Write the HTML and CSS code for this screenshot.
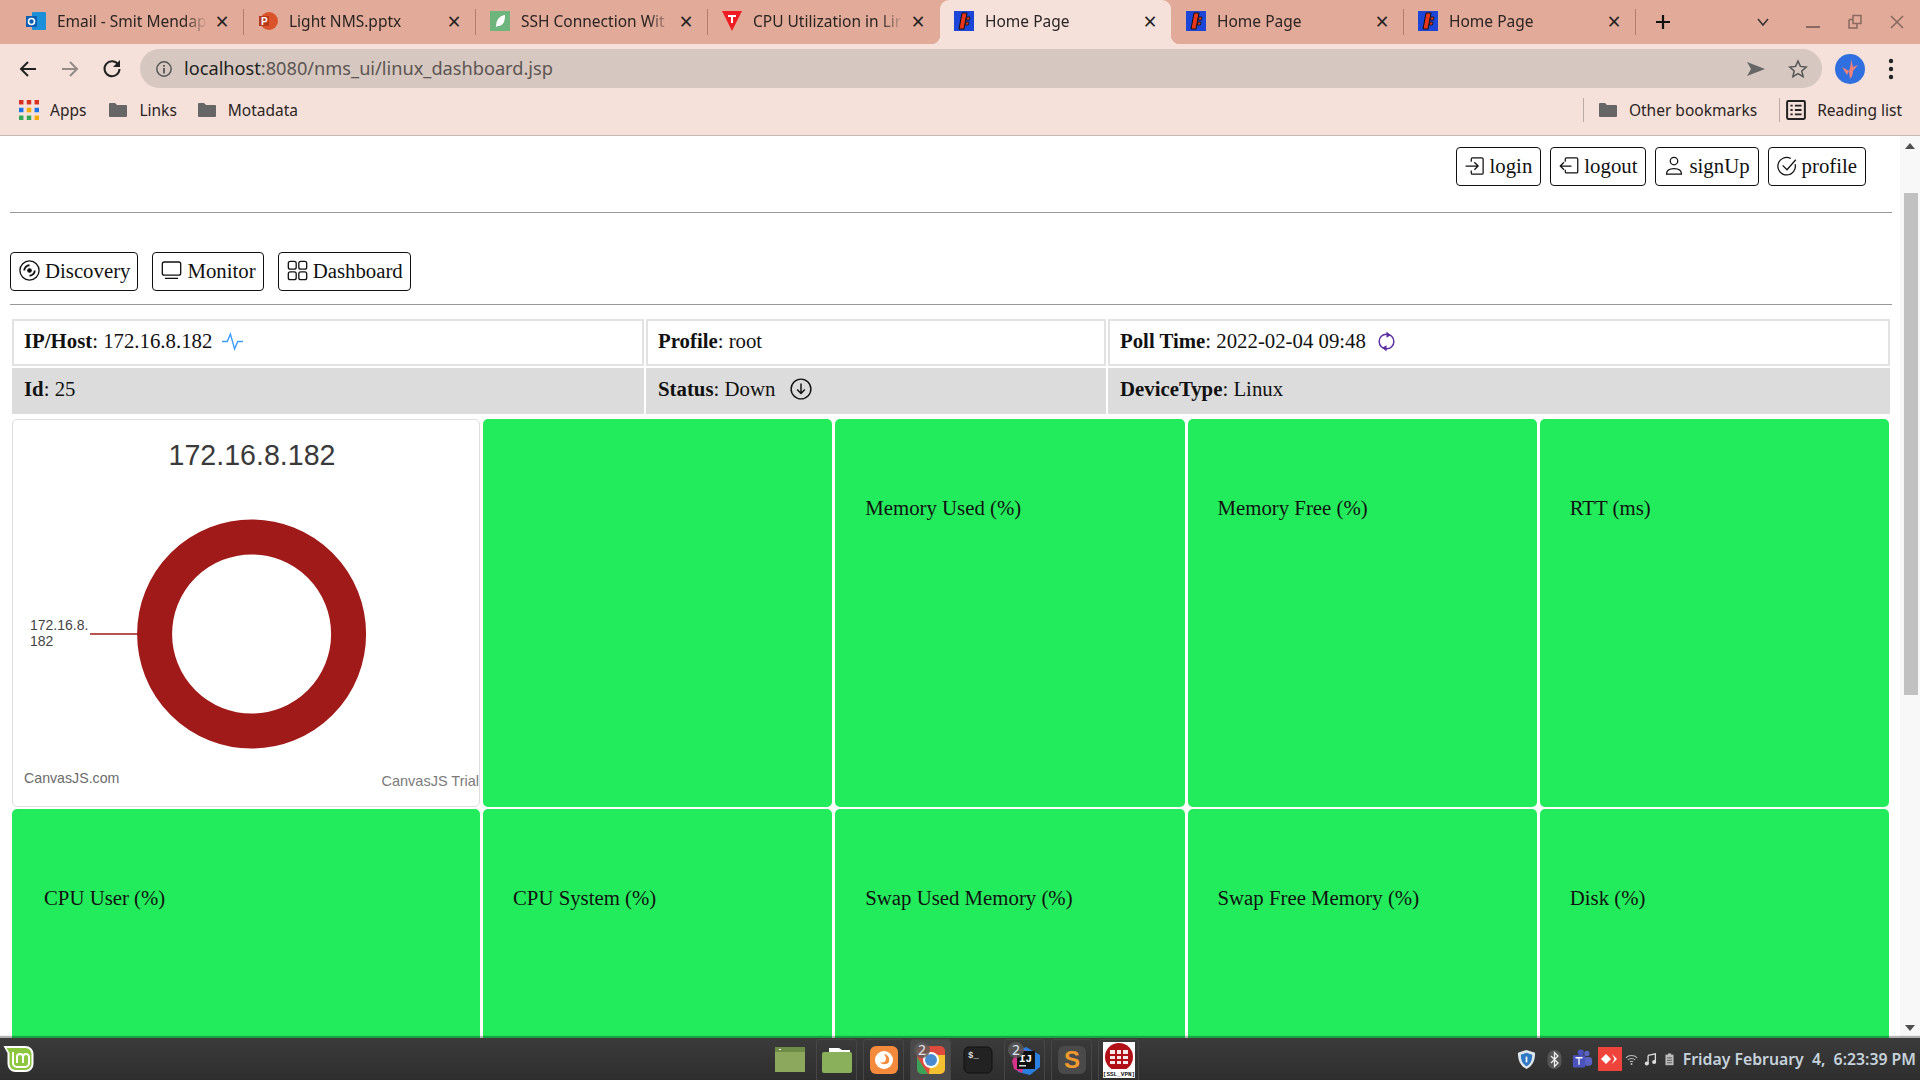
FILE: index.html
```html
<!DOCTYPE html>
<html lang="en">
<head>
    <meta charset="UTF-8">
    <title>Home Page</title>
    <link rel="stylesheet" href="styles.css">
</head>
<body>
    <svg class="defs" width="0" height="0">
        <symbol id="fav-home" viewBox="0 0 20 20">
            <rect width="20" height="20" fill="#1c46d8"/>
            <path d="M8 2h5l-3 16H5z" fill="#e8351c" stroke="#111" stroke-width="1"/>
            <path d="M13 6h3l-.6 3h-3zM12 11h3l-.6 3h-3z" fill="#e8351c" stroke="#111" stroke-width=".8"/>
        </symbol>
        <symbol id="folder" viewBox="0 0 20 20">
            <path d="M1 4a1 1 0 0 1 1-1h5l2 2h9a1 1 0 0 1 1 1v10a1 1 0 0 1-1 1H2a1 1 0 0 1-1-1z" fill="#666"/>
        </symbol>
    </svg>

    <!-- browser window -->
    <div class="tabstrip">
        <div class="tab">
            <svg class="fav" viewBox="0 0 20 20"><rect x="6" y="1" width="14" height="18" rx="1" fill="#1b8fd8"/><rect x="0" y="5" width="11" height="11" fill="#0a5fb4"/><circle cx="5.5" cy="10.5" r="3" fill="none" stroke="#fff" stroke-width="1.6"/></svg>
            <span class="tab-title">Email - Smit Mendap</span>
            <span class="tab-close">×</span>
        </div>
        <i class="tab-sep"></i>
        <div class="tab">
            <svg class="fav" viewBox="0 0 20 20"><circle cx="11" cy="10" r="9" fill="#d9542b"/><rect x="1" y="5" width="10" height="10" fill="#b7391a"/><text x="3" y="13.5" class="fav-letter">P</text></svg>
            <span class="tab-title">Light NMS.pptx</span>
            <span class="tab-close">×</span>
        </div>
        <i class="tab-sep"></i>
        <div class="tab">
            <svg class="fav" viewBox="0 0 20 20"><rect width="20" height="20" fill="#6db57c"/><path d="M6 16c0-7 3-11 9-12 0 7-2 11-7 11z" fill="#fff"/></svg>
            <span class="tab-title">SSH Connection Wit</span>
            <span class="tab-close">×</span>
        </div>
        <i class="tab-sep"></i>
        <div class="tab">
            <svg class="fav" viewBox="0 0 20 20"><path d="M0 0h20L10 20z" fill="#ee1c25"/><path d="M6 4h8v2h-3v6H9V6H6z" fill="#fff"/></svg>
            <span class="tab-title">CPU Utilization in Lir</span>
            <span class="tab-close">×</span>
        </div>
        <i class="tab-sep tab-sep-off"></i>
        <div class="tab tab-active">
            <svg class="fav"><use href="#fav-home"/></svg>
            <span class="tab-title">Home Page</span>
            <span class="tab-close">×</span>
        </div>
        <i class="tab-sep tab-sep-off"></i>
        <div class="tab">
            <svg class="fav"><use href="#fav-home"/></svg>
            <span class="tab-title">Home Page</span>
            <span class="tab-close">×</span>
        </div>
        <i class="tab-sep"></i>
        <div class="tab">
            <svg class="fav"><use href="#fav-home"/></svg>
            <span class="tab-title">Home Page</span>
            <span class="tab-close">×</span>
        </div>
        <i class="tab-sep"></i>
        <svg class="strip-plus" viewBox="0 0 16 16"><path d="M8 1v14M1 8h14" stroke="#111" stroke-width="2.2"/></svg>
        <div class="window-controls">
            <svg class="win-icon win-chevron" viewBox="0 0 16 16"><path d="M3 5l5 6 5-6" fill="none" stroke="#333" stroke-width="1.5"/></svg>
            <svg class="win-icon" viewBox="0 0 16 16"><path d="M1 13h14" stroke="#8a6a60" stroke-width="2"/></svg>
            <svg class="win-icon" viewBox="0 0 16 16"><path d="M6 1.5h8v8H6zM2 5.5h4M2 5.500v8.500h8v-4" fill="none" stroke="#8a6a60" stroke-width="1.5"/></svg>
            <svg class="win-icon" viewBox="0 0 16 16"><path d="M2 2l12 12M14 2L2 14" stroke="#8a6a60" stroke-width="1.6"/></svg>
        </div>
    </div>

    <div class="toolbar">
        <svg class="nav-icon" viewBox="0 0 20 20"><path d="M18 10H3M10 3l-7 7 7 7" fill="none" stroke="#222" stroke-width="2"/></svg>
        <svg class="nav-icon" viewBox="0 0 20 20"><path d="M2 10h15M10 3l7 7-7 7" fill="none" stroke="#948a86" stroke-width="2"/></svg>
        <svg class="nav-icon" viewBox="0 0 20 20"><path d="M16.500 6A7.500 7.500 0 1 0 17.500 10" fill="none" stroke="#222" stroke-width="2"/><path d="M18 1v7h-7z" fill="#222"/></svg>
        <div class="omnibox">
            <svg class="omni-info" viewBox="0 0 20 20"><circle cx="10" cy="10" r="8" fill="none" stroke="#555" stroke-width="1.600"/><path d="M10 9v6M10 5.500v2" stroke="#555" stroke-width="2"/></svg>
            <span class="omni-url"><b>localhost</b>:8080/nms_ui/linux_dashboard.jsp</span>
            <svg class="omni-action" viewBox="0 0 20 20"><path d="M1 3l18 7-18 7 4-7z" fill="#666"/></svg>
            <svg class="omni-action" viewBox="0 0 20 20"><path d="M10 2l2.400 5.400 5.800.6-4.400 3.900 1.300 5.700-5.100-3-5.100 3 1.300-5.700L1.800 8l5.800-.6z" fill="none" stroke="#555" stroke-width="1.500"/></svg>
        </div>
        <svg class="avatar" viewBox="0 0 30 30"><circle cx="15" cy="15" r="15" fill="#2f6fe0"/><path d="M16 5c0 6-1 9-2 12l1 8c2-2 3-5 3-8l5-6-5 2zM14 17L7 13l5 8z" fill="#f08078"/></svg>
        <svg class="menu-dots" viewBox="0 0 6 22"><circle cx="3" cy="3" r="2.200"/><circle cx="3" cy="11" r="2.200"/><circle cx="3" cy="19" r="2.200"/></svg>
    </div>

    <div class="bookmarks">
        <span class="bm">
            <svg class="bm-icon" viewBox="0 0 18 18">
                <rect x="0" y="0" width="4" height="4" fill="#d93025"/><rect x="7" y="0" width="4" height="4" fill="#d93025"/><rect x="14" y="0" width="4" height="4" fill="#d93025"/>
                <rect x="0" y="7" width="4" height="4" fill="#1a73e8"/><rect x="7" y="7" width="4" height="4" fill="#f9ab00"/><rect x="14" y="7" width="4" height="4" fill="#1a73e8"/>
                <rect x="0" y="14" width="4" height="4" fill="#34a853"/><rect x="7" y="14" width="4" height="4" fill="#34a853"/><rect x="14" y="14" width="4" height="4" fill="#f9ab00"/>
            </svg>Apps
        </span>
        <span class="bm bm-links"><svg class="bm-icon"><use href="#folder"/></svg>Links</span>
        <span class="bm"><svg class="bm-icon"><use href="#folder"/></svg>Motadata</span>
        <i class="bm-sep bm-push"></i>
        <span class="bm"><svg class="bm-icon"><use href="#folder"/></svg>Other bookmarks</span>
        <i class="bm-sep bm-sep-tight"></i>
        <span class="bm"><svg class="bm-icon" viewBox="0 0 18 18"><rect x="1" y="1" width="16" height="16" rx="1" fill="none" stroke="#222" stroke-width="1.800"/><path d="M4 5h2M8 5h6M4 9h2M8 9h6M4 13h2M8 13h6" stroke="#222" stroke-width="1.600"/></svg>Reading list</span>
    </div>

    <div class="viewport">
        <main class="page">
            <div class="topnav">
                <a class="btn"><svg class="btn-icon" viewBox="0 0 16 16"><path d="M5 4.500V2.500a1 1 0 0 1 1-1h7.500a1 1 0 0 1 1 1v11a1 1 0 0 1-1 1H6a1 1 0 0 1-1-1v-2M0.500 8h9.500M7.500 5l3 3-3 3"/></svg>login</a>
                <a class="btn"><svg class="btn-icon" viewBox="0 0 16 16"><path d="M5 4.500V2.500a1 1 0 0 1 1-1h8a1 1 0 0 1 1 1v10a1 1 0 0 1-1 1H6a1 1 0 0 1-1-1v-1.500M10 8H1M4 5L1 8l3 3"/></svg>logout</a>
                <a class="btn"><svg class="btn-icon" viewBox="0 0 16 16"><circle cx="8" cy="4" r="3"/><path d="M2 14.500c0-3 2-4.500 6-4.500s6 1.500 6 4.500z"/></svg>signUp</a>
                <a class="btn"><svg class="btn-icon" viewBox="0 0 16 16"><path d="M14.500 6.500A7 7 0 1 1 11 2M4.500 7.500L8 11l7-8"/></svg>profile</a>
            </div>
            <hr class="rule">
            <div class="mainnav">
                <a class="btn"><svg class="btn-icon btn-icon-lg" viewBox="0 0 16 16"><circle cx="8" cy="8" r="7.300"/><circle cx="8" cy="8" r="1.300" fill="#000"/><path d="M4 8a4 4 0 0 1 4-4M12 8a4 4 0 0 1-4 4" stroke-width="1.400"/></svg>Discovery</a>
                <a class="btn"><svg class="btn-icon btn-icon-lg" viewBox="0 0 16 16"><rect x="1" y="1.500" width="14" height="10" rx="1.500"/><path d="M3 14h10"/></svg>Monitor</a>
                <a class="btn"><svg class="btn-icon btn-icon-lg" viewBox="0 0 16 16"><rect x="1" y="1" width="6" height="6" rx="1.500"/><rect x="9" y="1" width="6" height="6" rx="1.500"/><rect x="1" y="9" width="6" height="6" rx="1.500"/><rect x="9" y="9" width="6" height="6" rx="1.500"/></svg>Dashboard</a>
            </div>
            <hr class="rule rule-tight">

            <div class="info">
                <div class="info-cell"><span><strong>IP/Host</strong>: 172.16.8.182</span>
                    <svg class="info-icon" viewBox="0 0 20 20"><path d="M0 10h5l3-7 4 14 3-7h5" fill="none" stroke="#3b9cff" stroke-width="1.300"/></svg>
                </div>
                <div class="info-cell"><span><strong>Profile</strong>: root</span></div>
                <div class="info-cell"><span><strong>Poll Time</strong>: 2022-02-04 09:48</span>
                    <svg class="info-icon" viewBox="0 0 20 20"><circle cx="10" cy="10" r="7" fill="none" stroke="#5a2ca0" stroke-width="1.400"/><path d="M10 0.500l4 3.500-4 2.500zM10 19.500l-4-3.500 4-2.500z" fill="#5a2ca0"/></svg>
                </div>
                <div class="info-cell info-cell-alt"><span><strong>Id</strong>: 25</span></div>
                <div class="info-cell info-cell-alt"><span><strong>Status</strong>: Down</span>
                    <svg class="info-icon info-icon-status" viewBox="0 0 20 20"><circle cx="10" cy="10" r="9" fill="none" stroke="#111" stroke-width="1.300"/><path d="M10 5v9M6.500 10.500L10 14l3.500-3.500" fill="none" stroke="#111" stroke-width="1.300"/></svg>
                </div>
                <div class="info-cell info-cell-alt"><span><strong>DeviceType</strong>: Linux</span></div>
            </div>

            <div class="metrics">
                <div class="chart-card">
                    <svg class="chart" viewBox="0 0 466 386">
                        <text class="chart-title" x="239" y="44.500" text-anchor="middle">172.16.8.182</text>
                        <circle cx="238.600" cy="214" r="97" fill="none" stroke="#a11a1a" stroke-width="35"/>
                        <path d="M77 214h48" stroke="#a11a1a" stroke-width="1.500"/>
                        <text class="chart-label" x="17" y="210">172.16.8.</text>
                        <text class="chart-label" x="17" y="226">182</text>
                        <text class="chart-credit" x="11" y="362.500">CanvasJS.com</text>
                        <text class="chart-trial" x="466" y="365.500" text-anchor="end">CanvasJS Trial</text>
                    </svg>
                </div>
                <div class="metric"></div>
                <div class="metric">Memory Used (%)</div>
                <div class="metric">Memory Free (%)</div>
                <div class="metric">RTT (ms)</div>
                <div class="metric metric-wide">CPU User (%)</div>
                <div class="metric">CPU System (%)</div>
                <div class="metric">Swap Used Memory (%)</div>
                <div class="metric">Swap Free Memory (%)</div>
                <div class="metric">Disk (%)</div>
            </div>
        </main>

        <div class="scrollbar">
            <i class="scroll-up"></i>
            <div class="scroll-track"><div class="scroll-thumb"></div></div>
            <i class="scroll-down"></i>
        </div>
    </div>

    <!-- desktop panel -->
    <footer class="taskbar">
        <svg class="mint" viewBox="0 0 32 28">
            <path d="M1 1h22a8 8 0 0 1 8 8v10a8 8 0 0 1-8 8H13a8 8 0 0 1-8-8V8z" fill="#fff"/>
            <path d="M4 3h19a6 6 0 0 1 6 6v10a6 6 0 0 1-6 6H13a6 6 0 0 1-6-6V8z" fill="#8cc63f"/>
            <path d="M10.500 7v11a4 4 0 0 0 4 4h8a4 4 0 0 0 4-4v-6a3 3 0 0 0-6 0v6M20.500 12a3 3 0 0 0-6 0v6" fill="none" stroke="#fff" stroke-width="2"/>
        </svg>
        <div class="launcher">
            <span class="launch launch-plain">
                <svg class="launch-icon" viewBox="0 0 34 30"><rect x="2" y="2" width="30" height="25" fill="#8ba85c"/><rect x="2" y="2" width="30" height="5" fill="#6f8b48"/><rect x="6" y="4" width="2" height="1" fill="#fff"/></svg>
            </span>
            <span class="launch">
                <svg class="launch-icon" viewBox="0 0 34 30"><path d="M9 3h10l3 2h8v4H9z" fill="#fff"/><rect x="2" y="7" width="30" height="21" rx="2" fill="#8bb05c"/></svg>
            </span>
            <span class="launch">
                <svg class="launch-icon" viewBox="0 0 34 34"><rect x="3" y="3" width="28" height="28" rx="6" fill="#f58a3c"/><circle cx="17" cy="17" r="9" fill="#fff"/><path d="M17 11a6 6 0 0 1 5 8c-2 3-7 3-9 0 3 1 6 0 6-3 0-2-1-4-2-5z" fill="#f58a3c"/></svg>
            </span>
            <span class="launch launch-active">
                <svg class="launch-icon" viewBox="0 0 34 34">
                    <rect x="3" y="3" width="28" height="28" rx="5" fill="#de4b3e"/>
                    <path d="M3 14l11 17H8a5 5 0 0 1-5-5z" fill="#3aa357"/>
                    <path d="M17 12h14v14a5 5 0 0 1-5 5h-11z" fill="#f3c12f"/>
                    <circle cx="17" cy="17" r="8" fill="#fff"/><circle cx="17" cy="17" r="6" fill="#4a8bd0"/>
                </svg>
                <b class="launch-badge">2</b>
            </span>
            <span class="launch launch-plain">
                <svg class="launch-icon" viewBox="0 0 34 34"><rect x="3" y="4" width="28" height="26" rx="5" fill="#222" stroke="#111"/><text class="term-text" x="7" y="15">$_</text></svg>
            </span>
            <span class="launch">
                <svg class="launch-icon" viewBox="0 0 34 34"><path d="M6 10l12-6 14 8v12l-10 8-12-3z" fill="#2a7fe0"/><path d="M4 18l6-12 10 2-6 22-8-4z" fill="#d6338b"/><rect x="9" y="8" width="18" height="18" fill="#111"/><text class="ij-text" x="11" y="19">IJ</text><rect x="11" y="22" width="7" height="1.500" fill="#ddd"/></svg>
                <b class="launch-badge">2</b>
            </span>
            <span class="launch">
                <svg class="launch-icon" viewBox="0 0 34 34"><rect x="3" y="3" width="28" height="28" rx="6" fill="#4a4a4a"/><text class="sublime-text" x="17" y="25" text-anchor="middle">S</text></svg>
            </span>
            <span class="launch">
                <svg class="launch-icon launch-icon-ssl" viewBox="0 0 32 36">
                    <rect width="32" height="36" fill="#fff"/>
                    <circle cx="16" cy="15" r="14" fill="#b01016"/>
                    <path d="M7 8h18v14H7z" fill="#f4e8e8"/>
                    <path d="M13 8v14M19 8v14M7 13h18M7 18h18" stroke="#b01016" stroke-width="2"/>
                    <rect y="27" width="32" height="9" fill="#fff"/>
                    <text class="ssl-text" x="16" y="34" text-anchor="middle">[SSL_VPN]</text>
                </svg>
            </span>
        </div>
        <div class="tray">
            <svg class="tray-icon" viewBox="0 0 20 22"><path d="M10 1l9 3c0 9-3 14-9 17C4 18 1 13 1 4z" fill="#dfe6ea"/><path d="M10 4l6 2c0 6-2 10-6 12-4-2-6-6-6-12z" fill="#2f78c4"/><path d="M10 8v6" stroke="#fff" stroke-width="1.800"/></svg>
            <svg class="tray-icon" viewBox="0 0 20 24"><rect x="2" y="1" width="16" height="22" rx="8" fill="#555"/><path d="M6 8l8 8-4 4V4l4 4-8 8" fill="none" stroke="#eee" stroke-width="1.500"/></svg>
            <svg class="tray-icon" viewBox="0 0 24 24"><circle cx="17" cy="5" r="3" fill="#5a62c4"/><rect x="13" y="9" width="10" height="10" rx="4" fill="#5a62c4"/><circle cx="10" cy="4" r="3.500" fill="#4b53bc"/><rect x="1" y="7" width="14" height="14" rx="1" fill="#4b53bc"/><path d="M4 10h8M8 10v8" stroke="#fff" stroke-width="1.500"/></svg>
            <svg class="tray-anydesk" viewBox="0 0 24 24"><rect width="24" height="24" fill="#ef443b"/><path d="M8 7l5 5-5 5-5-5z" fill="#fff"/><path d="M14 7l5 5-5 5 2.500-5z" fill="#fff"/></svg>
            <svg class="tray-small" viewBox="0 0 16 14"><path d="M1 5a10 10 0 0 1 14 0M3.500 7.500a6.500 6.500 0 0 1 9 0M6 10a3 3 0 0 1 4 0" fill="none" stroke="#bbb" stroke-width="1.300"/><circle cx="8" cy="12.500" r="1.200" fill="#bbb"/></svg>
            <svg class="tray-small" viewBox="0 0 16 16"><path d="M5 3l9-2v10M5 3v10" fill="none" stroke="#ddd" stroke-width="1.600"/><circle cx="3.500" cy="13" r="2.500" fill="#ddd"/><circle cx="12.500" cy="11" r="2.500" fill="#ddd"/></svg>
            <svg class="tray-small" viewBox="0 0 12 16"><rect x="1" y="2" width="10" height="13" fill="#bbb"/><rect x="4" y="0.500" width="4" height="2" fill="#bbb"/><path d="M3 6h6M3 9h6M3 12h6" stroke="#444"/></svg>
            <span class="clock">Friday February  4,  6:23:39 PM</span>
        </div>
    </footer>
</body>
</html>
```
FILE: styles.css
```css
html, body {
    height: 100%;
    margin: 0;
}
body {
    display: flex;
    flex-direction: column;
    overflow: hidden;
    font-family: "Noto Sans", sans-serif;
    background: #fff;
}
.defs {
    position: absolute;
}

/* tabs */
.tabstrip {
    display: flex;
    align-items: center;
    height: 44px;
    padding-left: 12px;
    background: #e2aa98;
    flex-shrink: 0;
}
.tab {
    position: relative;
    display: flex;
    align-items: center;
    box-sizing: border-box;
    width: 231px;
    height: 44px;
    padding: 0 14px 2px 14px;
    font-size: 15.500px;
    color: #2a2423;
}
.tab-active {
    background: #f5e1da;
    border-radius: 9px 9px 0 0;
}
.tab-active::before,
.tab-active::after {
    content: "";
    position: absolute;
    bottom: 0;
    width: 9px;
    height: 9px;
}
.tab-active::before {
    left: -9px;
    background: radial-gradient(circle at 0 0, #e2aa98 9px, #f5e1da 9.500px);
}
.tab-active::after {
    right: -9px;
    background: radial-gradient(circle at 100% 0, #e2aa98 9px, #f5e1da 9.500px);
}
.fav {
    width: 20px;
    height: 20px;
    margin-right: 11px;
    flex-shrink: 0;
}
.fav-letter {
    font: bold 10px "Liberation Sans", sans-serif;
    fill: #fff;
}
.tab-title {
    flex: 1;
    min-width: 0;
    overflow: hidden;
    white-space: nowrap;
    -webkit-mask-image: linear-gradient(to right, #000 85%, transparent 100%);
    mask-image: linear-gradient(to right, #000 85%, transparent 100%);
}
.tab-close {
    width: 14px;
    margin-left: 8px;
    text-align: center;
    font-size: 23px;
    line-height: 20px;
    color: #222;
}
.tab-sep {
    flex-shrink: 0;
    width: 1px;
    height: 26px;
    background: #b0806f;
}
.tab-sep-off {
    background: transparent;
}
.strip-plus {
    width: 16px;
    height: 16px;
    margin-left: 19px;
}
.window-controls {
    display: flex;
    align-items: center;
    margin-left: auto;
    padding-right: 15px;
    gap: 26px;
}
.win-icon {
    width: 16px;
    height: 16px;
}
.win-chevron {
    margin-right: 8px;
}

/* toolbar */
.toolbar {
    display: flex;
    align-items: center;
    height: 49px;
    padding-left: 18px;
    background: #f5e1da;
    flex-shrink: 0;
}
.nav-icon {
    width: 20px;
    height: 20px;
    margin-right: 22px;
    flex-shrink: 0;
}
.omnibox {
    display: flex;
    align-items: center;
    box-sizing: border-box;
    width: 1682px;
    height: 39px;
    margin-left: -4px;
    padding: 0 14px 0 15px;
    border-radius: 20px;
    background: #d6c7c0;
}
.omni-info {
    width: 18px;
    height: 18px;
    margin-right: 11px;
}
.omni-url {
    flex: 1;
    padding-bottom: 2px;
    font-size: 18.200px;
    color: #5c5552;
    white-space: nowrap;
}
.omni-url b {
    font-weight: 400;
    color: #221f1e;
}
.omni-action {
    width: 20px;
    height: 20px;
    margin-left: 22px;
}
.avatar {
    width: 30px;
    height: 30px;
    margin-left: 13px;
}
.menu-dots {
    width: 6px;
    height: 22px;
    margin-left: 23px;
    fill: #222;
}

/* bookmarks */
.bookmarks {
    display: flex;
    align-items: center;
    box-sizing: border-box;
    height: 43px;
    padding: 0 18px 8px 19px;
    border-bottom: 1px solid #c6b9b3;
    background: #f5e1da;
    flex-shrink: 0;
    font-size: 15.500px;
    color: #2a2423;
}
.bm {
    display: flex;
    align-items: center;
    margin-right: 22px;
    white-space: nowrap;
}
.bm-links {
    margin-right: 20px;
}
.bm:last-child {
    margin-right: 0;
}
.bm-icon {
    width: 20px;
    height: 20px;
    margin-right: 11px;
}
.bm-sep {
    width: 1px;
    height: 24px;
    margin-right: 14px;
    background: #b9aca6;
}
.bm-sep-tight {
    margin-right: 6px;
}
.bm-push {
    margin-left: auto;
}

/* page */
.viewport {
    flex: 1;
    display: flex;
    min-height: 0;
    overflow: hidden;
}
.page {
    flex: 1;
    min-width: 0;
    padding: 11px 8px 0 10px;
    font-family: "Liberation Serif", serif;
    font-size: 20.800px;
    color: #111;
}
.topnav {
    display: flex;
    justify-content: flex-end;
    gap: 9px;
    padding-right: 26px;
}
.topnav .btn {
    padding-right: 8px;
}
.mainnav {
    display: flex;
    gap: 14px;
}
.btn {
    display: flex;
    align-items: center;
    box-sizing: border-box;
    height: 39px;
    padding: 0 7px 2px 8px;
    border: 1px solid #111;
    border-radius: 4px;
    white-space: nowrap;
}
.btn-icon {
    width: 20px;
    height: 20px;
    margin-right: 5px;
    fill: none;
    stroke: #111;
    stroke-width: 1;
    flex-shrink: 0;
}
.btn-icon-lg {
    width: 21px;
    height: 21px;
}
.rule {
    height: 1px;
    margin: 26px 0 39px;
    border: 0;
    background: #999;
}
.rule-tight {
    margin: 13px 0 14px;
}

.info {
    display: grid;
    grid-template-columns: 632px 460px 782px;
    grid-template-rows: 47px 46px;
    gap: 2px;
    margin-left: 2px;
}
.info-cell {
    display: flex;
    align-items: center;
    box-sizing: border-box;
    padding: 0 10px 3px;
    border: 2px solid #e2e2e2;
    white-space: nowrap;
}
.info-cell-alt {
    padding-bottom: 5px;
    border-color: #dcdcdc;
    background: #dcdcdc;
}
.info-icon {
    width: 21px;
    height: 21px;
    margin-left: 10px;
}
.info-icon-status {
    width: 22px;
    height: 22px;
    margin-left: 15px;
}

.metrics {
    display: grid;
    grid-template-columns: 468px repeat(4, 1fr);
    grid-auto-rows: 388px;
    gap: 2px 3px;
    width: 1877px;
    margin: 5px 0 0 2px;
}
.chart-card {
    box-sizing: border-box;
    border: 1px solid #dedede;
    border-radius: 5px;
    background: #fff;
}
.chart {
    display: block;
    width: 466px;
    height: 386px;
    font-family: "Liberation Sans", sans-serif;
}
.chart-title {
    font-size: 28.600px;
    fill: #3a3a3a;
}
.chart-label {
    font-size: 14px;
    fill: #444;
}
.chart-credit {
    font-size: 14.200px;
    fill: #6c6c6c;
}
.chart-trial {
    font-size: 14.500px;
    fill: #7a7a7a;
}
.metric {
    box-sizing: border-box;
    padding: 77px 30px 0;
    border-radius: 5px;
    background: #23ec5c;
    color: #111;
    line-height: 24px;
}
.metric-wide {
    padding-left: 32px;
}

/* fake scrollbar */
.scrollbar {
    display: flex;
    flex-direction: column;
    align-items: center;
    flex-shrink: 0;
    width: 20px;
    background: #f8f8f8;
}
.scroll-up,
.scroll-down {
    width: 0;
    height: 0;
    margin: 7px 0;
    border-left: 5px solid transparent;
    border-right: 5px solid transparent;
}
.scroll-up {
    border-bottom: 6px solid #505050;
}
.scroll-down {
    border-top: 6px solid #505050;
}
.scroll-track {
    flex: 1;
    width: 100%;
    padding: 37px 2px 0 4px;
    box-sizing: border-box;
}
.scroll-thumb {
    height: 502px;
    background: #c1c1c1;
}

/* panel */
.taskbar {
    display: flex;
    align-items: center;
    position: relative;
    height: 42px;
    flex-shrink: 0;
    background: linear-gradient(#3b3b3b, #2e2e2e);
    box-shadow: 0 -2px 1px rgba(0, 0, 0, 0.3);
}
.mint {
    width: 33px;
    height: 28px;
    margin-left: 2px;
}
.launcher {
    display: flex;
    gap: 6px;
    margin-left: 734px;
}
.launch {
    position: relative;
    display: flex;
    align-items: center;
    justify-content: center;
    box-sizing: border-box;
    width: 41px;
    height: 41px;
    border: 1px solid #464646;
    border-bottom: 0;
    border-radius: 3px 3px 0 0;
}
.launch-plain {
    border-color: transparent;
}
.launch-active {
    background: #4a4a4a;
}
.launch-icon {
    width: 34px;
    height: 34px;
}
.launch-icon-ssl {
    width: 32px;
    height: 36px;
}
.launch-badge {
    position: absolute;
    top: 2px;
    left: 3px;
    width: 16px;
    border-radius: 8px;
    background: rgba(90, 90, 90, 0.8);
    font: 400 14px/16px "Noto Sans", sans-serif;
    text-align: center;
    color: #dfe8f0;
}
.term-text {
    font: bold 9px "Liberation Mono", monospace;
    fill: #ddd;
}
.ij-text {
    font: bold 11px "Liberation Mono", monospace;
    fill: #fff;
}
.sublime-text {
    font: bold 24px "Liberation Sans", sans-serif;
    fill: #f29a2e;
}
.ssl-text {
    font: bold 6px "Liberation Mono", monospace;
    fill: #111;
}
.tray {
    display: flex;
    align-items: center;
    margin-left: auto;
    padding-right: 4px;
}
.tray-icon {
    width: 21px;
    height: 21px;
    margin-right: 7px;
}
.tray-anydesk {
    width: 24px;
    height: 24px;
    margin-left: -2px;
    margin-right: 3px;
}
.tray-small {
    width: 13px;
    height: 13px;
    margin-right: 6px;
}
.clock {
    margin-left: 1px;
    font-size: 15.800px;
    font-weight: 600;
    color: #c6d2dc;
    white-space: pre;
}
```
